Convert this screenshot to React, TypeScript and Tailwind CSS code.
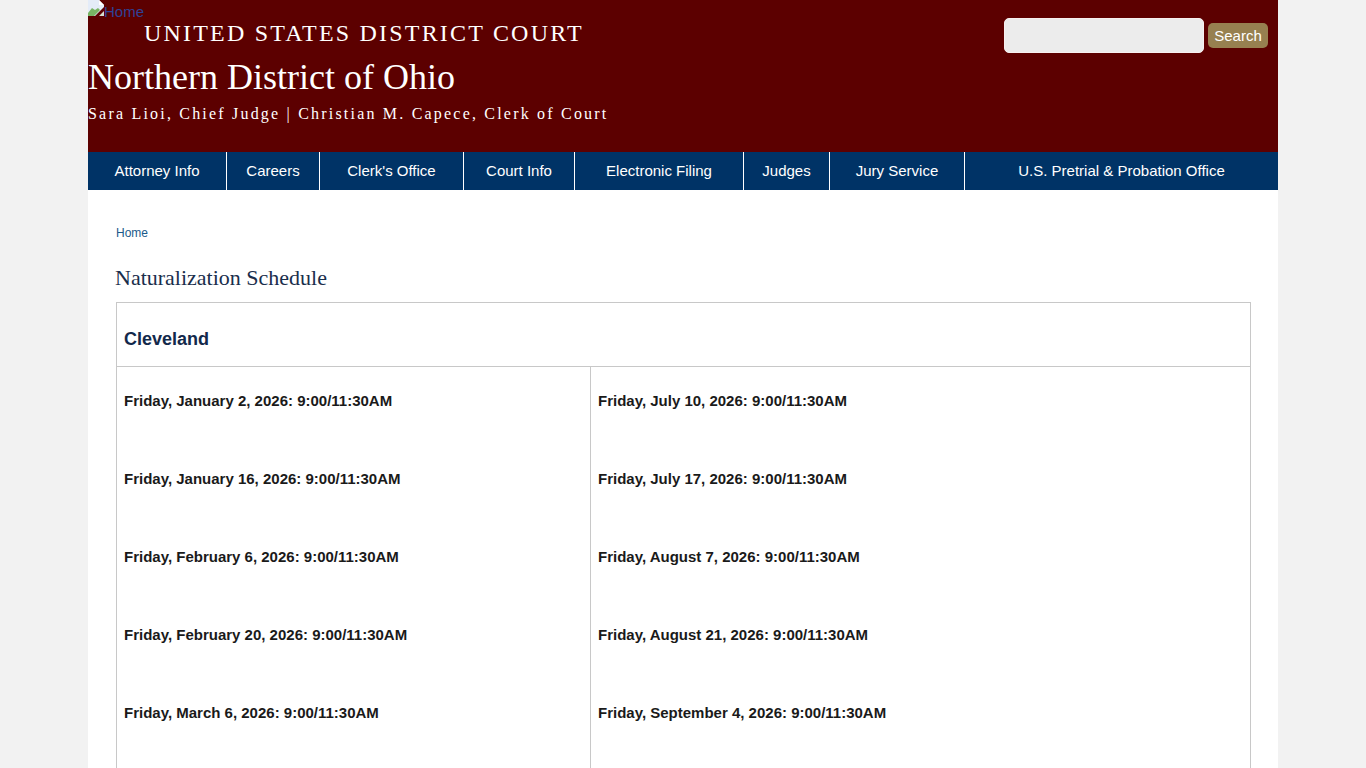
const navItems = [
  { label: "Attorney Info", width: "w-[139px]" },
  { label: "Careers", width: "w-[93px]" },
  { label: "Clerk's Office", width: "w-[144px]" },
  { label: "Court Info", width: "w-[111px]" },
  { label: "Electronic Filing", width: "w-[169px]" },
  { label: "Judges", width: "w-[86px]" },
  { label: "Jury Service", width: "w-[135px]" },
  { label: "U.S. Pretrial & Probation Office", width: "flex-1" },
];

const rows = [
  ["Friday, January 2, 2026: 9:00/11:30AM", "Friday, July 10, 2026: 9:00/11:30AM"],
  ["Friday, January 16, 2026: 9:00/11:30AM", "Friday, July 17, 2026: 9:00/11:30AM"],
  ["Friday, February 6, 2026: 9:00/11:30AM", "Friday, August 7, 2026: 9:00/11:30AM"],
  ["Friday, February 20, 2026: 9:00/11:30AM", "Friday, August 21, 2026: 9:00/11:30AM"],
  ["Friday, March 6, 2026: 9:00/11:30AM", "Friday, September 4, 2026: 9:00/11:30AM"],
];

function BrokenImage() {
  return (
    <svg width="16" height="16" viewBox="0 0 16 16" className="block shrink-0">
      <path d="M0 0H11L16 5V7L7 16H0Z" fill="#e4ecf8" />
      <path d="M11 0V5H16Z" fill="#ffffff" />
      <path d="M0 16V13L4 8L7 10L10 8L12 10L6 16Z" fill="#78b464" />
      <path d="M11 16L16 11V16Z" fill="#d5dfd0" />
    </svg>
  );
}

export default function App() {
  return (
    <div className="h-[768px] overflow-hidden bg-[#f2f2f2] font-['Liberation_Sans',sans-serif]">
      <div className="ml-[88px] min-h-[768px] w-[1190px] bg-white">
        <header className="flex h-[152px] justify-between bg-[#5c0000] text-white">
          <div className="flex flex-col">
            <a className="flex h-[16px] items-start text-[15px] leading-[23px] text-[#2f4296]">
              <BrokenImage />
              <span>Home</span>
            </a>
            <div className="mt-[4px] pl-[56px] font-['Liberation_Serif',serif] text-[24px] leading-[26px] tracking-[2.2px]">
              UNITED STATES DISTRICT COURT
            </div>
            <div className="mt-[10px] font-['Liberation_Serif',serif] text-[36px] leading-[42px]">
              Northern District of Ohio
            </div>
            <div className="mt-[6px] font-['Liberation_Serif',serif] text-[16px] leading-[20px] tracking-[2.2px]">
              Sara Lioi, Chief Judge | Christian M. Capece, Clerk of Court
            </div>
          </div>
          <div className="mr-[10px] mt-[18px] flex h-[35px] items-center gap-[4px]">
            <div className="h-[35px] w-[200px] rounded-[5px] border border-[#f7f0f0] bg-[#ececec]" />
            <button className="h-[25px] w-[60px] rounded-[5px] bg-[#978050] pt-px text-[15px] text-white">
              Search
            </button>
          </div>
        </header>
        <nav className="flex h-[38px] bg-[#003366]">
          {navItems.map((item, i) => (
            <div
              key={item.label}
              className={`flex items-center justify-center text-[15px] text-white ${item.width} ${
                i < navItems.length - 1 ? "border-r border-white" : ""
              }`}
            >
              {item.label}
            </div>
          ))}
        </nav>
        <main className="pl-[28px] pr-[27px] pt-[36px]">
          <a className="block text-[12px] leading-[14px] text-[#1b5a8a]">Home</a>
          <h1 className="mt-[23px] -ml-px font-['Liberation_Serif',serif] text-[22px] leading-[30px] text-[#1a2e4c]">
            Naturalization Schedule
          </h1>
          <div className="mt-[9px] border border-[#c8c8c8]">
            <div className="flex h-[64px] items-center border-b border-[#c8c8c8] px-[7px] pt-[9px] text-[18px] font-bold text-[#12294b]">
              Cleveland
            </div>
            {[...rows, ["", ""]].map(([a, b], i) => (
              <div key={i} className="flex h-[78px]">
                <div className="w-[474px] border-r border-[#c8c8c8] px-[7px] pt-[25px] text-[15px] leading-[17px] font-bold text-[#1a1a1a]">
                  {a}
                </div>
                <div className="flex-1 px-[7px] pt-[25px] text-[15px] leading-[17px] font-bold text-[#1a1a1a]">
                  {b}
                </div>
              </div>
            ))}
          </div>
        </main>
      </div>
    </div>
  );
}
